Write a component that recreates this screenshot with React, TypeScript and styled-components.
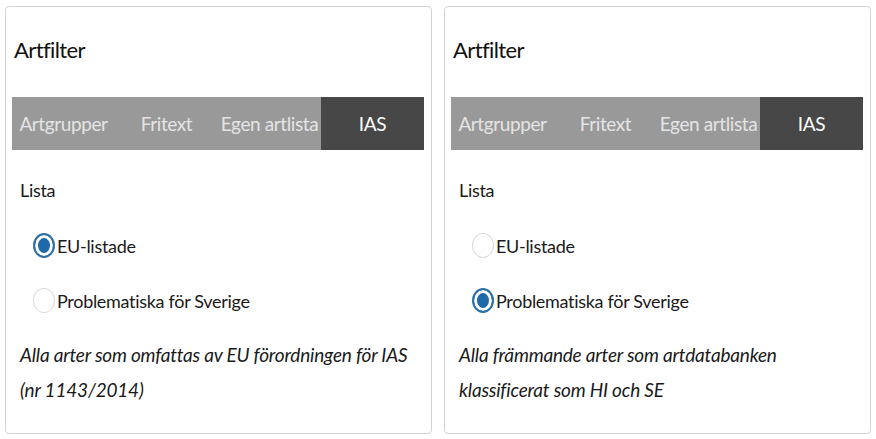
import React from 'react'
import styled, { createGlobalStyle } from 'styled-components'

const Global = createGlobalStyle`
  body {
    margin: 0;
    background: #fff;
    font-family: Lato, "Open Sans", Arial, sans-serif;
    color: #1a1a1a;
  }
`

const Page = styled.div`
  display: flex;
  gap: 12px;
  padding: 6px 5px;
`

const Card = styled.section`
  width: 428px;
  height: 428px;
  box-sizing: border-box;
  border: 1px solid #d2d2d2;
  border-radius: 4px;
  padding: 0 7px 0 6px;
`

const Title = styled.h2`
  margin: 0;
  height: 90px;
  box-sizing: border-box;
  padding: 29px 0 0 2px;
  font-size: 22px;
  line-height: 28px;
  font-weight: 400;
  letter-spacing: -0.6px;
  color: #111;
`

const Tabs = styled.div`
  display: grid;
  grid-template-columns: repeat(4, 1fr);
  height: 53px;
  background: #999;
`

const Tab = styled.div<{ $active?: boolean }>`
  display: flex;
  align-items: center;
  justify-content: center;
  font-size: 19px;
  letter-spacing: -0.4px;
  white-space: nowrap;
  color: ${(p) => (p.$active ? '#fff' : '#e4e4e4')};
  background: ${(p) => (p.$active ? '#474747' : 'transparent')};
`

const Body = styled.div`
  padding: 28px 0 0 8px;
`

const Label = styled.div`
  font-size: 18px;
  line-height: 24px;
  letter-spacing: -0.3px;
  color: #1a1a1a;
`

const Options = styled.div`
  display: flex;
  flex-direction: column;
  gap: 30px;
  padding: 31px 0 0 13px;
`

const Option = styled.label`
  display: flex;
  align-items: center;
  gap: 2px;
  font-size: 18px;
  letter-spacing: -0.3px;
  color: #1a1a1a;
`

const Radio = styled.span<{ $checked?: boolean }>`
  width: 22px;
  height: 25px;
  box-sizing: border-box;
  border-radius: 50%;
  border: ${(p) => (p.$checked ? '2px solid #2d6fa7' : '1px solid #dadada')};
  background: ${(p) => (p.$checked ? '#1e69a8' : '#fff')};
  box-shadow: ${(p) => (p.$checked ? 'inset 0 0 0 3px #fff' : 'none')};
`

const Description = styled.p`
  margin: 0;
  padding-top: 24px;
  font-style: italic;
  font-size: 19px;
  line-height: 35px;
  letter-spacing: -0.2px;
  color: #1a1a1a;
`

const tabs = ['Artgrupper', 'Fritext', 'Egen artlista', 'IAS']

interface FilterProps {
  selected: number
  description: React.ReactNode
}

const FilterCard = ({ selected, description }: FilterProps) => (
  <Card>
    <Title>Artfilter</Title>
    <Tabs>
      {tabs.map((t, i) => (
        <Tab key={t} $active={i === 3}>{t}</Tab>
      ))}
    </Tabs>
    <Body>
      <Label>Lista</Label>
      <Options>
        {['EU-listade', 'Problematiska för Sverige'].map((o, i) => (
          <Option key={o}>
            <Radio $checked={i === selected} />
            {o}
          </Option>
        ))}
      </Options>
      <Description>{description}</Description>
    </Body>
  </Card>
)

export default function App() {
  return (
    <Page>
      <Global />
      <FilterCard
        selected={0}
        description={<>Alla arter som omfattas av EU förordningen för IAS<br />(nr 1143/2014)</>}
      />
      <FilterCard
        selected={1}
        description={<>Alla främmande arter som artdatabanken<br />klassificerat som HI och SE</>}
      />
    </Page>
  )
}
